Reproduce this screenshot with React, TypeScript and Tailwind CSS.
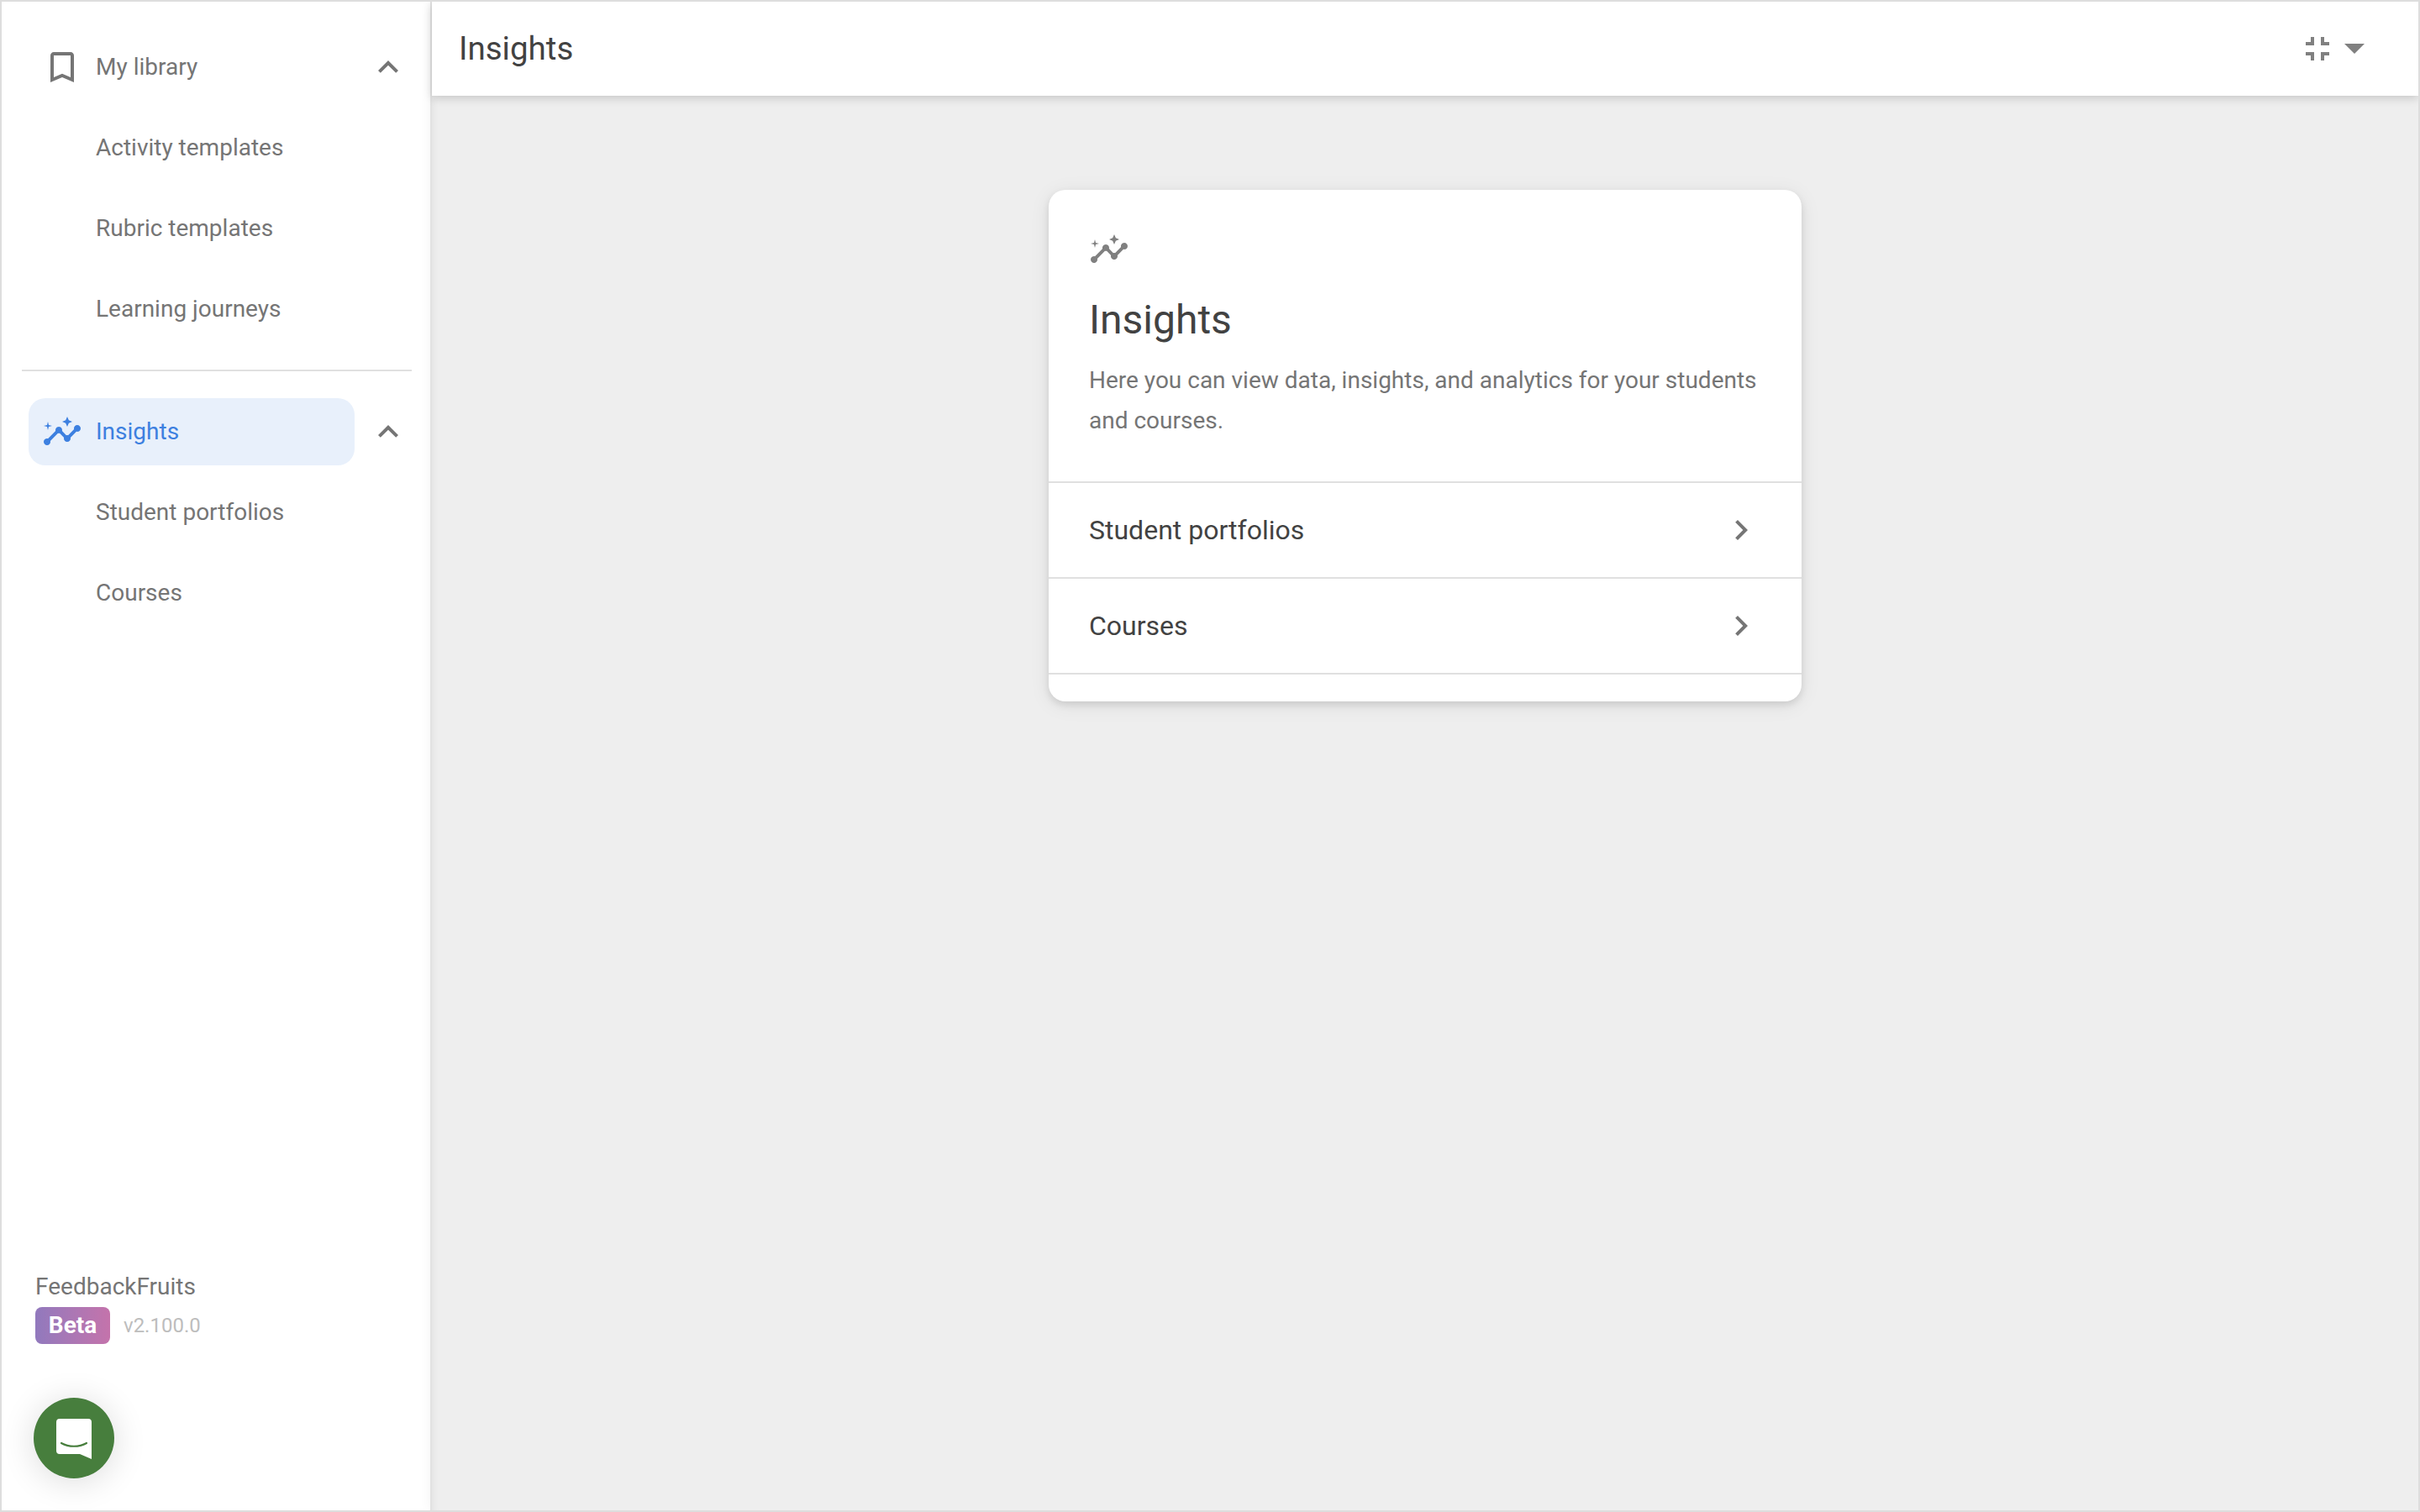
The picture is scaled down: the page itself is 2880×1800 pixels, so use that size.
const InsightsIcon = ({ className }: { className: string }) => (
  <svg viewBox="0 0 24 24" fill="currentColor" className={className}>
    <path d="M21 8c-1.45 0-2.26 1.44-1.93 2.51l-3.55 3.56c-.3-.09-.74-.09-1.04 0l-2.55-2.55C12.27 10.45 11.46 9 10 9c-1.45 0-2.27 1.44-1.93 2.52l-4.56 4.55C2.44 15.74 1 16.55 1 18c0 1.1.9 2 2 2 1.45 0 2.26-1.44 1.93-2.51l4.55-4.56c.3.09.74.09 1.04 0l2.55 2.55C12.73 16.55 13.54 18 15 18c1.45 0 2.27-1.44 1.93-2.52l3.56-3.55c1.07.33 2.51-.48 2.51-1.93 0-1.1-.9-2-2-2z" />
    <path d="M15 9l.94-2.07L18 6l-2.06-.93L15 3l-.92 2.07L12 6l2.08.93zM3.5 11L4 9l2-.5L4 8l-.5-2L3 8l-2 .5L3 9z" />
  </svg>
);

const ExpandLess = () => (
  <svg viewBox="0 0 24 24" fill="currentColor" className="w-12 h-12 text-[#757575]">
    <path d="M12 8l-6 6 1.41 1.41L12 10.83l4.59 4.58L18 14z" />
  </svg>
);

const ChevronRight = () => (
  <svg viewBox="0 0 24 24" fill="currentColor" className="w-12 h-12 text-[#757575]">
    <path d="M10 6L8.59 7.41 13.17 12l-4.58 4.59L10 18l6-6z" />
  </svg>
);

const SubItem = ({ label }: { label: string }) => (
  <div className="h-24 flex items-center pl-[112px] text-[28px] text-[#757575]">{label}</div>
);

const CardRow = ({ label }: { label: string }) => (
  <div className="h-[114px] flex items-center justify-between pl-12 pr-12 border-b-2 border-[#e0e0e0]">
    <span className="text-[32px] text-[#424242]">{label}</span>
    <ChevronRight />
  </div>
);

export default function App() {
  return (
    <div className="relative w-[2880px] h-[1800px] flex border-2 border-[#dddddd] bg-white font-[Roboto,sans-serif] overflow-hidden">
      <aside className="w-[510px] shrink-0 flex flex-col bg-white pt-[30px]">
        <div className="h-24 flex items-center pl-[48px] pr-[26px]">
          <svg viewBox="0 0 24 24" fill="currentColor" className="w-12 h-12 text-[#757575]">
            <path d="M17 3H7c-1.1 0-1.99.9-1.99 2L5 21l7-3 7 3V5c0-1.1-.9-2-2-2zm0 15l-5-2.18L7 18V5h10v13z" />
          </svg>
          <span className="ml-[16px] text-[28px] text-[#757575] flex-1">My library</span>
          <ExpandLess />
        </div>
        <SubItem label="Activity templates" />
        <SubItem label="Rubric templates" />
        <SubItem label="Learning journeys" />
        <div className="h-[2px] bg-[#e0e0e0] ml-[24px] mr-[22px] mt-[24px]" />
        <div className="h-24 flex items-center pl-[32px] pr-[26px] mt-6">
          <div className="w-[388px] h-20 rounded-[20px] bg-[#e8f0fb] flex items-center pl-[16px] text-[#3d80e0]">
            <InsightsIcon className="w-12 h-12" />
            <span className="ml-[16px] text-[28px]">Insights</span>
          </div>
          <div className="ml-auto">
            <ExpandLess />
          </div>
        </div>
        <SubItem label="Student portfolios" />
        <SubItem label="Courses" />
        <div className="mt-auto pl-[40px] pb-[198px]">
          <div className="text-[28px] leading-[36px] text-[#757575] translate-y-[2px]">FeedbackFruits</div>
          <div className="flex items-center mt-[8px]">
            <span className="w-[89px] h-[44px] rounded-[8px] flex items-center justify-center text-[28px] font-bold text-white bg-gradient-to-r from-[#9179bd] to-[#c473ab]">
              Beta
            </span>
            <span className="ml-4 text-[24px] text-[#bdbdbd]">v2.100.0</span>
          </div>
        </div>
      </aside>

      <main className="relative z-10 flex-1 flex flex-col min-w-0 bg-[#eeeeee] border-l-2 border-[#e2e2e2] shadow-[0_0_14px_rgba(0,0,0,0.05)]">
        <header className="relative z-10 h-[112px] shrink-0 bg-white flex items-center pl-[32px] pr-[64px] shadow-[0_3px_10px_rgba(0,0,0,0.16)]">
          <h1 className="text-[38.5px] font-normal text-[#424242] flex-1">Insights</h1>
          <svg viewBox="0 0 24 24" fill="currentColor" className="w-12 h-12 text-[#808080]">
            <path d="M5 16h3v3h2v-5H5v2zm3-8H5v2h5V5H8v3zm6 11h2v-3h3v-2h-5v5zm2-11V5h-2v5h5V8h-3z" />
          </svg>
          <svg viewBox="0 0 24 12" fill="currentColor" className="w-6 h-3 ml-[8px] text-[#808080]">
            <path d="M0 0h24L12 12z" />
          </svg>
        </header>
        <div className="flex-1 flex justify-center pt-[112px] shadow-[inset_8px_0_10px_-8px_rgba(0,0,0,0.07)]">
          <section className="w-[896px] h-[609px] bg-white rounded-[20px] shadow-[0_4px_8px_rgba(0,0,0,0.1),0_4px_24px_rgba(0,0,0,0.08)]">
            <div className="h-[349px] px-12 pt-[47px] border-b-2 border-[#e0e0e0]">
              <InsightsIcon className="w-12 h-12 text-[#808080]" />
              <h2 className="mt-[28px] text-[48px] leading-[64px] font-normal text-[#424242]">Insights</h2>
              <p className="mt-[16px] text-[28px] leading-[48px] text-[#757575]">
                Here you can view data, insights, and analytics for your students and courses.
              </p>
            </div>
            <CardRow label="Student portfolios" />
            <CardRow label="Courses" />
          </section>
        </div>
      </main>

      <div className="absolute left-[38px] top-[1662px] z-20 w-[96px] h-[96px] rounded-full bg-[#477e3d] flex items-center justify-center shadow-[0_4px_40px_rgba(0,0,0,0.14)]">
        <svg viewBox="0 0 42 48" className="w-[42px] h-[48px] mt-[2px]">
          <path d="M4 0h34a4 4 0 0 1 4 4v44l-14-6H4a4 4 0 0 1-4-4V4a4 4 0 0 1 4-4z" fill="#ffffff" />
          <path d="M6 29c9 5 21 5 30 0" fill="none" stroke="#477e3d" strokeWidth="2.2" strokeLinecap="round" />
        </svg>
      </div>
    </div>
  );
}
